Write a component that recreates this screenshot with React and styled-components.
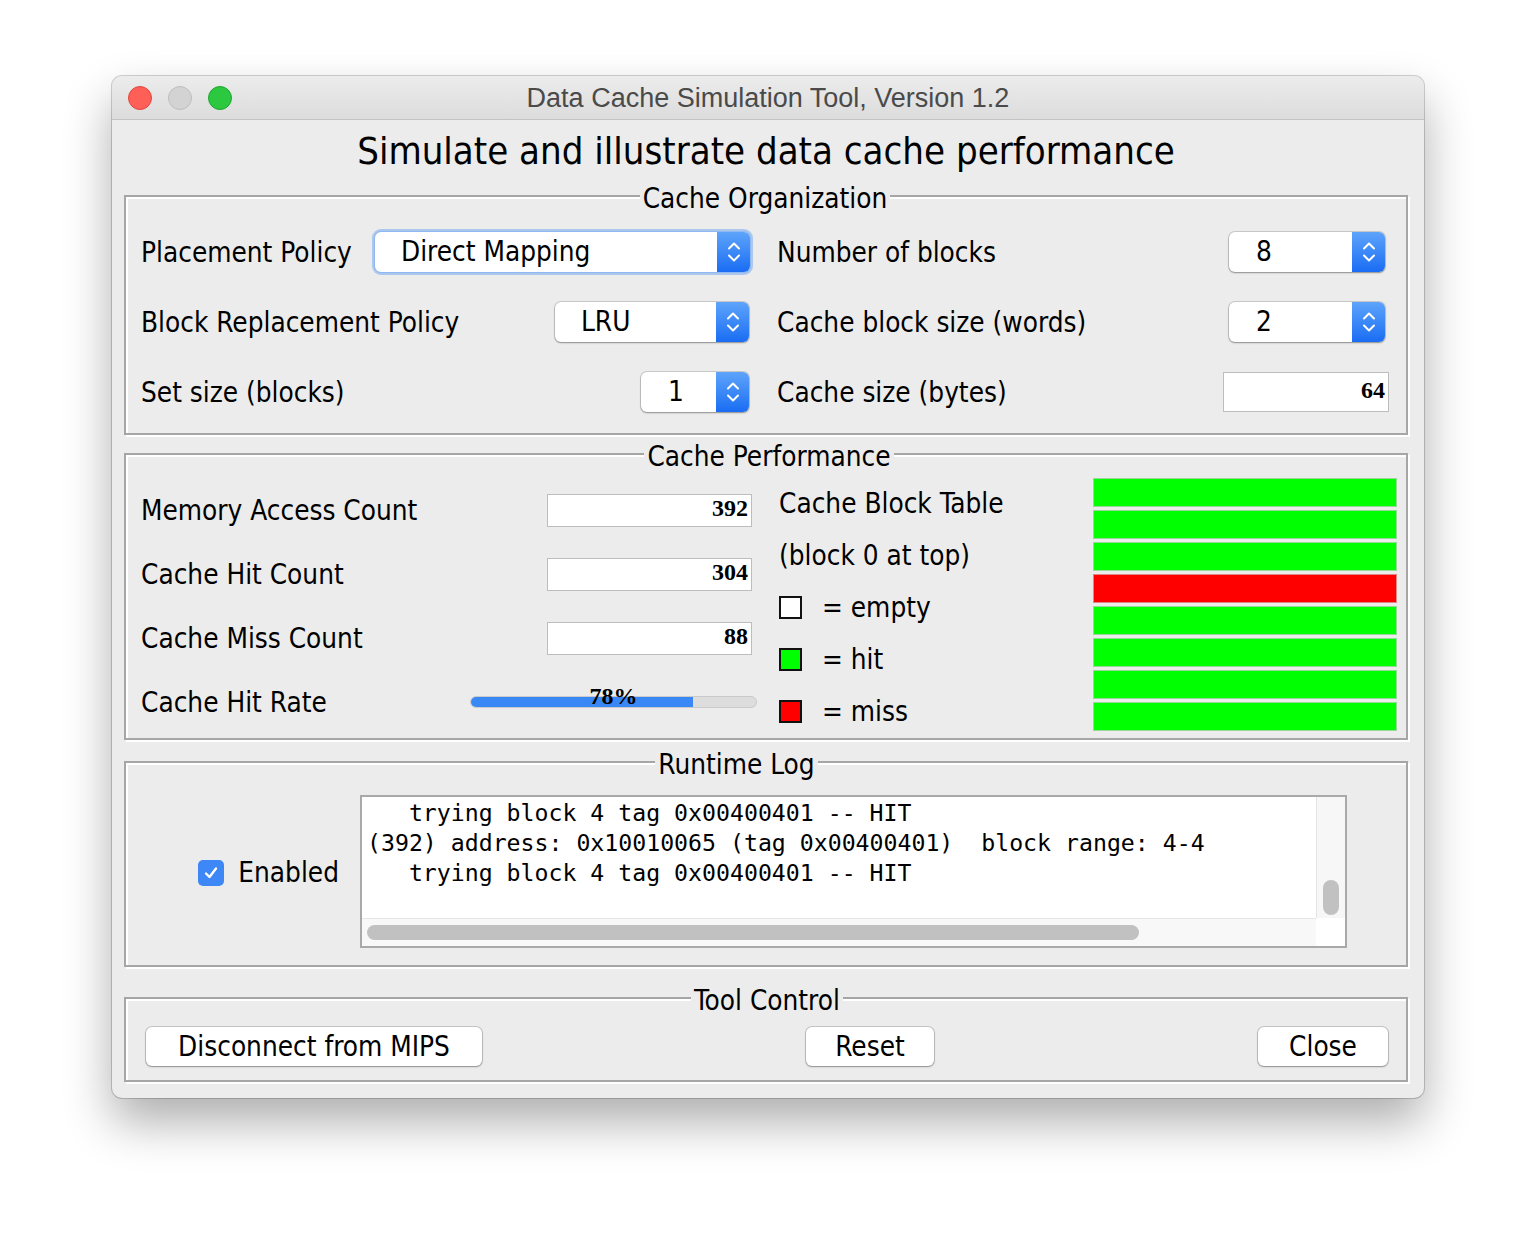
import React from "react";
import styled, { createGlobalStyle } from "styled-components";

const GlobalStyle = createGlobalStyle`
  html, body {
    margin: 0;
    padding: 0;
    background: #ffffff;
  }
  body {
    font-family: "DejaVu Sans Condensed", "DejaVu Sans", sans-serif;
    color: #111;
  }
`;

const Page = styled.div`
  width: 1536px;
  height: 1246px;
  box-sizing: border-box;
  padding: 76px 0 0 112px;
`;

const Window = styled.div`
  width: 1312px;
  height: 1022px;
  box-sizing: border-box;
  display: flex;
  flex-direction: column;
  background: #ececec;
  border-radius: 10px;
  overflow: hidden;
  box-shadow: 0 0 0 1px rgba(0, 0, 0, 0.18), 0 24px 48px rgba(0, 0, 0, 0.32);
`;

const TitleBar = styled.div`
  height: 44px;
  box-sizing: border-box;
  flex: none;
  display: grid;
  grid-template-columns: 1fr auto 1fr;
  align-items: center;
  background: linear-gradient(#ececec, #dcdcdc);
  border-bottom: 1px solid #c3c3c3;
`;

const Lights = styled.div`
  display: flex;
  gap: 16px;
  padding-left: 16px;
`;

const Light = styled.span`
  width: 24px;
  height: 24px;
  border-radius: 50%;
  box-sizing: border-box;
  background: ${(p) => p.$bg};
  border: 1px solid ${(p) => p.$edge};
`;

const WindowTitle = styled.div`
  padding-top: 2px;
  font-family: "Liberation Sans", Arial, sans-serif;
  font-size: 27px;
  color: #4a4a4a;
`;

const Body = styled.div`
  display: flex;
  flex-direction: column;
  padding: 0 16px 0 12px;
`;

const Heading = styled.h1`
  margin: 9px 0 0;
  font-weight: normal;
  font-size: 38px;
  line-height: 44px;
  text-align: center;
  color: #000;
`;

const Group = styled.fieldset`
  margin: ${(p) => p.$top}px 0 0;
  padding: ${(p) => p.$pad};
  border: 2px solid #a6a6a6;
  box-shadow: 2px 2px 0 #fff, inset 2px 2px 0 #fff;
  min-width: 0;
`;

const GroupTitle = styled.legend`
  margin: 0 auto;
  padding: 6px 3px 0;
  font-size: 27.7px;
  line-height: 30px;
  background: linear-gradient(transparent 16px, #ececec 16px);
  color: #000;
`;

const OrgGrid = styled.div`
  display: grid;
  grid-template-columns: 609px 1fr;
  column-gap: 27px;
  row-gap: 30px;
`;

const Row = styled.div`
  height: ${(p) => p.$h || 40}px;
  display: flex;
  align-items: center;
  justify-content: space-between;
  padding-right: ${(p) => p.$inset || 0}px;
`;

const Label = styled.span`
  font-size: 27.7px;
  color: #000;
  white-space: nowrap;
`;

const SelectBox = styled.div`
  width: ${(p) => p.$w}px;
  height: 40px;
  box-sizing: border-box;
  display: flex;
  background: #fff;
  border-radius: 6px;
  overflow: hidden;
  box-shadow: ${(p) =>
    p.$focus
      ? "0 0 0 1px #8fb8ef, 0 0 0 3px rgba(120, 170, 240, 0.55)"
      : "0 0 0 1px rgba(0, 0, 0, 0.14), 0 1px 2px rgba(0, 0, 0, 0.3)"};
`;

const SelectValue = styled.span`
  flex: 1;
  padding-left: ${(p) => p.$pad || 26}px;
  font-size: 27.7px;
  line-height: 40px;
  color: #000;
`;

const Stepper = styled.span`
  width: 33px;
  flex: none;
  display: flex;
  align-items: center;
  justify-content: center;
  background: linear-gradient(#5ea4fb, #1a6df3);
`;

const Field = styled.div`
  width: ${(p) => p.$w}px;
  height: ${(p) => p.$h}px;
  box-sizing: border-box;
  margin-right: ${(p) => p.$mr || 0}px;
  background: #fff;
  border: 1px solid #bdbdbd;
  font-family: "Liberation Serif", "Times New Roman", serif;
  font-weight: bold;
  font-size: 24px;
  line-height: ${(p) => p.$h - 6}px;
  text-align: right;
  padding-right: 3px;
  color: #000;
`;

const PerfGrid = styled.div`
  display: grid;
  grid-template-columns: 616px 1fr 304px;
  column-gap: 22px;
  align-items: start;
`;

const Column = styled.div`
  display: flex;
  flex-direction: column;
  margin-top: ${(p) => p.$mt || 0}px;
`;

const Progress = styled.div`
  position: relative;
  width: 287px;
  height: 12px;
  box-sizing: border-box;
  border-radius: 6px;
  background: #dddddd;
  border: 1px solid #cacaca;
  overflow: visible;
`;

const ProgressFill = styled.div`
  height: 100%;
  border-radius: 6px 0 0 6px;
  background: #3a88f5;
`;

const ProgressText = styled.span`
  position: absolute;
  left: 0;
  right: 0;
  top: -14px;
  text-align: center;
  font-family: "Liberation Serif", "Times New Roman", serif;
  font-weight: bold;
  font-size: 24px;
  line-height: 26px;
  color: #000;
`;

const LegendRow = styled.div`
  height: 52px;
  display: flex;
  align-items: center;
  gap: 20px;
`;

const Swatch = styled.span`
  width: 23px;
  height: 23px;
  box-sizing: border-box;
  border: 2px solid #111;
  background: ${(p) => p.$bg};
`;

const BlockTable = styled.div`
  display: flex;
  flex-direction: column;
  gap: 3px;
`;

const Block = styled.div`
  height: 29px;
  box-sizing: border-box;
  background: ${(p) => (p.$miss ? "#ff0000" : "#00ff00")};
  border: 1px solid ${(p) => (p.$miss ? "#d88" : "#9ad89a")};
`;

const LogGrid = styled.div`
  display: grid;
  grid-template-columns: 234px 987px;
  align-items: center;
`;

const Enable = styled.label`
  display: flex;
  align-items: center;
  justify-content: flex-end;
  gap: 14px;
  padding: 2px 21px 0 0;
`;

const CheckBox = styled.span`
  width: 26px;
  height: 26px;
  border-radius: 5px;
  background: #3d87f6;
  display: flex;
  align-items: center;
  justify-content: center;
`;

const LogBox = styled.div`
  height: 153px;
  box-sizing: border-box;
  border: 2px solid #a9a9a9;
  background: #fff;
  display: grid;
  grid-template-columns: 1fr 29px;
  grid-template-rows: 1fr 28px;
`;

const LogText = styled.pre`
  margin: 0;
  padding: 1px 0 0 5px;
  font-family: "DejaVu Sans Mono", monospace;
  font-size: 23.2px;
  line-height: 30px;
  color: #000;
  overflow: hidden;
`;

const VTrack = styled.div`
  background: #f7f7f7;
  border-left: 1px solid #e4e4e4;
  display: flex;
  justify-content: center;
  padding-top: 83px;
`;

const VThumb = styled.span`
  width: 16px;
  height: 35px;
  border-radius: 8px;
  background: #c1c1c1;
`;

const HTrack = styled.div`
  background: #f8f8f8;
  border-top: 1px solid #e6e6e6;
  display: flex;
  align-items: center;
  padding-left: 5px;
`;

const HThumb = styled.span`
  width: 772px;
  height: 15px;
  border-radius: 8px;
  background: #c1c1c1;
`;

const Corner = styled.div`
  background: #fff;
`;

const ButtonRow = styled.div`
  display: flex;
  justify-content: space-between;
  align-items: center;
`;

const Button = styled.button`
  width: ${(p) => p.$w}px;
  height: 39px;
  box-sizing: border-box;
  padding: 0;
  background: #fff;
  border: none;
  border-radius: 6px;
  box-shadow: 0 0 0 1px rgba(0, 0, 0, 0.16), 0 1px 2px rgba(0, 0, 0, 0.28);
  font-family: "DejaVu Sans Condensed", "DejaVu Sans", sans-serif;
  font-size: 27.7px;
  color: #000;
`;

const Chevrons = () => (
  <svg width="14" height="26" viewBox="0 0 14 26" fill="none" stroke="#fff" strokeWidth="2" strokeLinecap="round" strokeLinejoin="round">
    <path d="M2 9.5 L7 4.5 L12 9.5" />
    <path d="M2 16.5 L7 21.5 L12 16.5" />
  </svg>
);

const Select = ({ w, value, focus, pad }) => (
  <SelectBox $w={w} $focus={focus}>
    <SelectValue $pad={pad}>{value}</SelectValue>
    <Stepper>
      <Chevrons />
    </Stepper>
  </SelectBox>
);

const blocks = ["hit", "hit", "hit", "miss", "hit", "hit", "hit", "hit"];

const log = `   trying block 4 tag 0x00400401 -- HIT
(392) address: 0x10010065 (tag 0x00400401)  block range: 4-4
   trying block 4 tag 0x00400401 -- HIT`;

export default function App() {
  const hitRate = 78;
  return (
    <Page>
      <GlobalStyle />
      <Window>
        <TitleBar>
          <Lights>
            <Light $bg="#fe5f57" $edge="#e2463f" />
            <Light $bg="#d3d3d3" $edge="#bdbdbd" />
            <Light $bg="#2bc840" $edge="#1fa630" />
          </Lights>
          <WindowTitle>Data Cache Simulation Tool, Version 1.2</WindowTitle>
          <span />
        </TitleBar>
        <Body>
          <Heading>Simulate and illustrate data cache performance</Heading>

          <Group $top={5} $pad="18px 17px 21px 15px">
            <GroupTitle>Cache Organization</GroupTitle>
            <OrgGrid>
              <Row>
                <Label>Placement Policy</Label>
                <Select w={375} value="Direct Mapping" focus />
              </Row>
              <Row $inset={4}>
                <Label>Number of blocks</Label>
                <Select w={156} value="8" pad={27} />
              </Row>
              <Row $inset={1}>
                <Label>Block Replacement Policy</Label>
                <Select w={194} value="LRU" />
              </Row>
              <Row $inset={4}>
                <Label>Cache block size (words)</Label>
                <Select w={156} value="2" pad={27} />
              </Row>
              <Row $inset={1}>
                <Label>Set size (blocks)</Label>
                <Select w={108} value="1" pad={27} />
              </Row>
              <Row>
                <Label>Cache size (bytes)</Label>
                <Field $w={166} $h={40}>64</Field>
              </Row>
            </OrgGrid>
          </Group>

          <Group $top={1} $pad="6px 9px 1px 15px">
            <GroupTitle>Cache Performance</GroupTitle>
            <PerfGrid>
              <Column>
                <Row $h={64}>
                  <Label>Memory Access Count</Label>
                  <Field $w={205} $h={33} $mr={5}>392</Field>
                </Row>
                <Row $h={64}>
                  <Label>Cache Hit Count</Label>
                  <Field $w={205} $h={33} $mr={5}>304</Field>
                </Row>
                <Row $h={64}>
                  <Label>Cache Miss Count</Label>
                  <Field $w={205} $h={33} $mr={5}>88</Field>
                </Row>
                <Row $h={64}>
                  <Label>Cache Hit Rate</Label>
                  <Progress>
                    <ProgressFill style={{ width: `${hitRate}%` }} />
                    <ProgressText>{hitRate}%</ProgressText>
                  </Progress>
                </Row>
              </Column>
              <Column $mt={-1}>
                <LegendRow>
                  <Label>Cache Block Table</Label>
                </LegendRow>
                <LegendRow>
                  <Label>(block 0 at top)</Label>
                </LegendRow>
                <LegendRow>
                  <Swatch $bg="#ffffff" />
                  <Label>= empty</Label>
                </LegendRow>
                <LegendRow>
                  <Swatch $bg="#00ff00" />
                  <Label>= hit</Label>
                </LegendRow>
                <LegendRow>
                  <Swatch $bg="#ff0000" />
                  <Label>= miss</Label>
                </LegendRow>
              </Column>
              <BlockTable>
                {blocks.map((b, i) => (
                  <Block key={i} $miss={b === "miss"} />
                ))}
              </BlockTable>
            </PerfGrid>
          </Group>

          <Group $top={4} $pad="15px 59px 17px 0">
            <GroupTitle>Runtime Log</GroupTitle>
            <LogGrid>
              <Enable>
                <CheckBox>
                  <svg width="16" height="16" viewBox="0 0 16 16" fill="none" stroke="#fff" strokeWidth="2.4" strokeLinecap="round" strokeLinejoin="round">
                    <path d="M3 8.5 L6.5 12 L13 3.5" />
                  </svg>
                </CheckBox>
                <Label>Enabled</Label>
              </Enable>
              <LogBox>
                <LogText>{log}</LogText>
                <VTrack>
                  <VThumb />
                </VTrack>
                <HTrack>
                  <HThumb />
                </HTrack>
                <Corner />
              </LogBox>
            </LogGrid>
          </Group>

          <Group $top={13} $pad="11px 18px 14px 20px">
            <GroupTitle>Tool Control</GroupTitle>
            <ButtonRow>
              <Button $w={336}>Disconnect from MIPS</Button>
              <Button $w={128}>Reset</Button>
              <Button $w={130}>Close</Button>
            </ButtonRow>
          </Group>
        </Body>
      </Window>
    </Page>
  );
}
